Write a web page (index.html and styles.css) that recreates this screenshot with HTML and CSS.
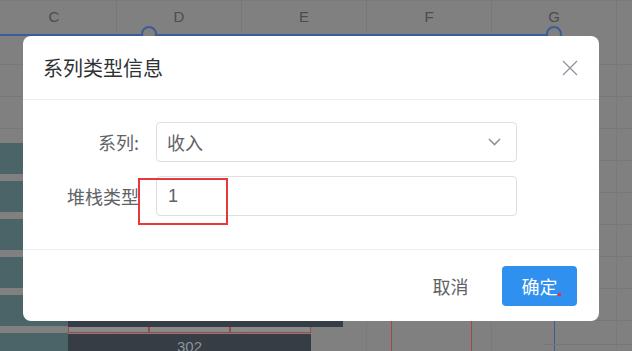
FILE: index.html
```html
<!DOCTYPE html>
<html lang="zh">
<head>
    <meta charset="UTF-8">
    <title>系列类型信息</title>
    <link rel="stylesheet" href="styles.css">
</head>
<body>
    <div class="sheet">
        <div class="col-head">
            <div class="col">C</div>
            <div class="col">D</div>
            <div class="col">E</div>
            <div class="col">F</div>
            <div class="col">G</div>
        </div>

        <!-- chart pieces drawn on the sheet -->
        <div class="sel-line"></div>
        <div class="handle h1"></div>
        <div class="handle h2"></div>
        <div class="bands"></div>
        <div class="bar-dark"></div>
        <div class="bar-cells">
            <span></span><span></span><span></span>
        </div>
        <div class="bar-total">302</div>
        <div class="vline red r1"></div>
        <div class="vline red r2"></div>
        <div class="vline blue"></div>
        <div class="hline"></div>

        <div class="mask">
            <div class="dialog">
                <div class="dialog-header">
                    <span class="dialog-title">系列类型信息</span>
                    <svg class="close" width="16" height="16" viewBox="0 0 16 16">
                        <path d="M1 1L15 15M15 1L1 15" stroke="#909399" stroke-width="1.3" fill="none"/>
                    </svg>
                </div>
                <div class="dialog-body">
                    <div class="form-item">
                        <label class="form-label">系列:</label>
                        <div class="input select">
                            <span>收入</span>
                            <svg width="13" height="8" viewBox="0 0 13 8">
                                <path d="M1 1L6.5 6.5L12 1" stroke="#909399" stroke-width="1.6" fill="none"/>
                            </svg>
                        </div>
                    </div>
                    <div class="form-item">
                        <label class="form-label">堆栈类型</label>
                        <div class="input"><span class="num">1</span></div>
                        <div class="mark"></div>
                    </div>
                </div>
                <div class="dialog-footer">
                    <button class="btn">取消</button>
                    <button class="btn primary">确定<i class="dot"></i></button>
                </div>
            </div>
        </div>
    </div>
</body>
</html>
```

FILE: styles.css
```css
body {
    margin: 0;
    font-family: "Noto Sans CJK SC", "Noto Sans", sans-serif;
}
.sheet {
    position: relative;
    width: 632px;
    height: 351px;
    overflow: hidden;
    background-color: #808080;
    background-image:
        repeating-linear-gradient(to bottom, transparent 0, transparent 31px, #787878 31px, #787878 32px),
        repeating-linear-gradient(to right, transparent 0, transparent 116px, #7a7a7a 116px, #7a7a7a 117px, transparent 117px, transparent 125px);
    background-position: 0 1px, 0 0;
}
.col-head {
    display: flex;
    margin-left: -8px;
    height: 32px;
    border-top: 1px solid #7a7a7a;
    background: #808080;
}
.col {
    flex: 0 0 124px;
    border-right: 1px solid #787878;
    text-align: center;
    line-height: 31px;
    font-family: "Liberation Sans", sans-serif;
    font-size: 15px;
    color: #4c4c4c;
}
.sel-line {
    position: absolute;
    left: 0;
    top: 34px;
    width: 554px;
    height: 2px;
    background: #3c5b98;
}
.handle {
    position: absolute;
    top: 26px;
    width: 12px;
    height: 12px;
    border: 2px solid #3c5b98;
    border-radius: 50%;
    background: #808080;
}
.h1 { left: 141px; }
.h2 { left: 546px; }
.bands {
    position: absolute;
    left: 0;
    top: 143px;
    width: 68px;
    height: 208px;
    background: repeating-linear-gradient(to bottom, #4a6467 0, #4a6467 31px, #808080 31px, #808080 38px);
}
.bar-dark {
    position: absolute;
    left: 68px;
    top: 280px;
    width: 275px;
    height: 47px;
    background: #363d44;
}
.bar-cells {
    position: absolute;
    left: 68px;
    top: 327px;
    display: flex;
}
.bar-cells span {
    width: 79px;
    height: 5px;
    border: 1px solid #a04848;
    border-top: none;
    background: #8a8a8a;
}
.bar-total {
    position: absolute;
    left: 68px;
    top: 334px;
    width: 243px;
    height: 30px;
    background: #363d44;
    color: #8c939b;
    text-align: center;
    font-family: "Liberation Sans", sans-serif;
    font-size: 15px;
    line-height: 26px;
}
.vline {
    position: absolute;
    top: 300px;
    width: 1px;
    height: 60px;
}
.red { background: #a04848; }
.r1 { left: 391px; }
.r2 { left: 471px; }
.blue { left: 554px; background: #3c5b98; }
.hline {
    position: absolute;
    left: 543px;
    top: 344px;
    width: 100px;
    height: 1px;
    background: #777;
}
.mask {
    position: absolute;
    inset: 0;
    padding: 36px 0 0 23px;
}
.dialog {
    width: 576px;
    background: #fff;
    border-radius: 8px;
}
.dialog-header {
    height: 63px;
    padding: 0 21px 0 20px;
    display: flex;
    align-items: center;
    justify-content: space-between;
    border-bottom: 1px solid #ebeef5;
}
.dialog-title {
    font-size: 20px;
    color: #303133;
}
.dialog-body {
    padding: 22px 0 33px;
    display: flex;
    flex-direction: column;
    gap: 14px;
}
.form-item {
    position: relative;
    display: flex;
}
.form-label {
    width: 116px;
    padding-right: 17px;
    text-align: right;
    line-height: 40px;
    font-size: 18px;
    color: #606266;
}
.input {
    width: 334px;
    height: 38px;
    border: 1px solid #dcdfe6;
    border-radius: 4px;
    padding: 0 15px 0 10px;
    display: flex;
    align-items: center;
    justify-content: space-between;
    font-size: 18px;
    color: #606266;
}
.num {
    font-family: "Liberation Sans", sans-serif;
    padding-left: 1px;
}
.mark {
    position: absolute;
    left: 115px;
    top: 2px;
    width: 86px;
    height: 43px;
    border: 2px solid #e8393a;
}
.dialog-footer {
    border-top: 1px solid #ebeef5;
    padding: 16px 22px 15px;
    display: flex;
    justify-content: flex-end;
    gap: 14px;
}
.btn {
    position: relative;
    width: 75px;
    height: 40px;
    border: none;
    border-radius: 4px;
    background: #fff;
    font-family: inherit;
    font-size: 18px;
    color: #606266;
    padding: 0;
}
.primary {
    background: #2f90f0;
    color: #fff;
}
.dot {
    position: absolute;
    left: 56px;
    top: 27px;
    width: 3px;
    height: 3px;
    background: #f03030;
}
```
